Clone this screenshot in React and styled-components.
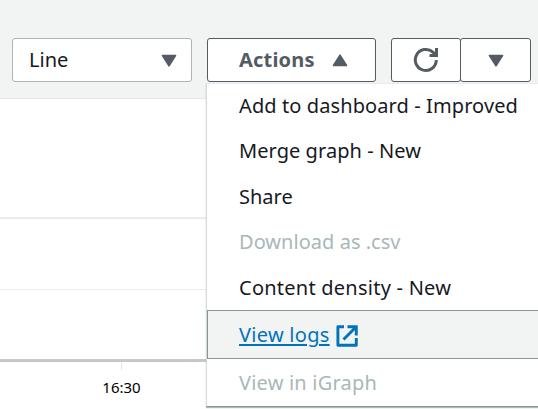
import React from "react";
import styled, { createGlobalStyle } from "styled-components";

const GlobalStyle = createGlobalStyle`
  *, *::before, *::after { box-sizing: border-box; }
  body {
    margin: 0;
    overflow: hidden;
    background: #fff;
    color: #16191f;
    font-family: "Noto Sans", "Open Sans", sans-serif;
  }
`;

const Page = styled.main`
  position: relative;
  width: 538px;
  height: 409px;
  overflow: hidden;
`;

const Toolbar = styled.header`
  display: flex;
  gap: 15px;
  height: 99px;
  padding: 38px 0 0 12px;
  background: #f2f3f3;
  border-bottom: 1px solid #e6e9e9;
`;

const Control = styled.button`
  display: flex;
  align-items: center;
  height: 44px;
  margin: 0;
  background: #fff;
  border: 1px solid #545b64;
  border-radius: 3px;
  color: #545b64;
  font: inherit;
  font-size: 20px;
  line-height: 28px;
`;

const Select = styled(Control)`
  justify-content: space-between;
  width: 180px;
  padding: 0 14px 0 16px;
  border-color: #aab7b8;
  color: #16191f;
`;

const ActionsButton = styled(Control)`
  justify-content: space-between;
  width: 169px;
  padding: 0 27px 0 31px;
  font-weight: 700;
`;

const ButtonGroup = styled.div`
  display: flex;
`;

const IconButton = styled(Control)`
  justify-content: center;
  width: ${(p) => p.$width}px;
  padding: 0;

  & + & { margin-left: -1px; }
`;

const Text = styled.span`
  letter-spacing: ${(p) => p.$spacing || 0}px;
  white-space: nowrap;
`;

const Chart = styled.section`
  display: flex;
  flex-direction: column;
`;

const GridBand = styled.div`
  height: ${(p) => p.$height}px;
  border-bottom: ${(p) => p.$line}px solid ${(p) => p.$color};
`;

const AxisLabel = styled.div`
  display: flex;
  flex-direction: column;
  align-items: center;
  width: 243px;
  font-size: 15px;
  line-height: 20px;
  color: #000;
`;

const Tick = styled.span`
  width: 1px;
  height: 8px;
  margin-bottom: 7px;
  background: #e6e6e6;
`;

const Menu = styled.ul`
  position: absolute;
  top: 83px;
  left: 206px;
  width: 345px;
  height: 324px;
  margin: 0;
  padding: 0;
  list-style: none;
  background: #fff;
  border-left: 1px solid #d5dbdb;
  border-top: 1px solid #eaeded;
  border-bottom: 1px solid #879596;
  box-shadow: 0 1px 1px rgba(0, 28, 36, 0.3);
`;

const MenuItem = styled.li`
  display: flex;
  align-items: center;
  height: 45.4px;
  padding: 0 0 1.4px 32px;
  font-size: 20px;
  line-height: 28px;
  color: ${(p) => (p.$disabled ? "#aab7b8" : "#16191f")};
`;

const ActiveItem = styled(MenuItem)`
  gap: 6px;
  height: 49px;
  margin-top: -1px;
  padding: 2px 0 0 31px;
  background: #f2f3f3;
  border: 1px solid #879596;
  color: #0073bb;
`;

const LastItem = styled(MenuItem)`
  height: 47px;
  padding: 2px 0 0 32px;
`;

const LinkText = styled(Text)`
  text-decoration: underline;
  text-decoration-thickness: 2px;
  text-underline-offset: 2px;
  text-decoration-skip-ink: auto;
`;

const Caret = ({ up }) => (
  <svg width="16" height="13" viewBox="0 0 16 13" aria-hidden="true">
    <path
      d={up ? "M8 1.2 14.5 11.5H1.5Z" : "M1.5 1.5h13L8 11.8Z"}
      fill="#545b64"
      stroke="#545b64"
      strokeWidth="1.6"
      strokeLinejoin="round"
    />
  </svg>
);

const RefreshIcon = () => (
  <svg width="26" height="26" viewBox="0 0 26 26" fill="none" stroke="#545b64" strokeWidth="3" aria-hidden="true">
    <path d="M23.3 13A10.5 10.5 0 1 1 19.9 5.2L23 8" />
    <path d="M23.5 1v7.5h-7" />
  </svg>
);

const ExternalSvg = styled.svg`
  margin-top: 1px;
`;

const ExternalIcon = () => (
  <ExternalSvg width="22" height="22" viewBox="0 0 22 22" fill="none" stroke="#0073bb" strokeWidth="2.9" aria-hidden="true">
    <path d="M8 1.7H1.9v18.6h18.4V13" strokeLinejoin="round" />
    <path d="M11.5 1.7h8.8v8.8M20 2 7.5 14.5" />
  </ExternalSvg>
);

export default function App() {
  return (
    <Page>
      <GlobalStyle />
      <Toolbar>
        <Select>
          <Text>Line</Text>
          <Caret />
        </Select>
        <ActionsButton>
          <Text $spacing={0.2}>Actions</Text>
          <Caret up />
        </ActionsButton>
        <ButtonGroup>
          <IconButton $width={70} aria-label="Refresh"><RefreshIcon /></IconButton>
          <IconButton $width={71} aria-label="Refresh options"><Caret /></IconButton>
        </ButtonGroup>
      </Toolbar>
      <Chart>
        <GridBand $height={120} $line={2} $color="#ebebeb" />
        <GridBand $height={71} $line={1} $color="#ebebeb" />
        <GridBand $height={72} $line={3} $color="#c8c8c8" />
        <AxisLabel>
          <Tick />
          <Text>16:30</Text>
        </AxisLabel>
      </Chart>
      <Menu>
        <MenuItem><Text $spacing={0.1}>Add to dashboard - Improved</Text></MenuItem>
        <MenuItem><Text $spacing={0.06}>Merge graph - New</Text></MenuItem>
        <MenuItem><Text>Share</Text></MenuItem>
        <MenuItem $disabled><Text $spacing={0.03}>Download as .csv</Text></MenuItem>
        <MenuItem><Text $spacing={0.24}>Content density - New</Text></MenuItem>
        <ActiveItem>
          <LinkText $spacing={0.28}>View logs</LinkText>
          <ExternalIcon />
        </ActiveItem>
        <LastItem $disabled><Text $spacing={0.2}>View in iGraph</Text></LastItem>
      </Menu>
    </Page>
  );
}
